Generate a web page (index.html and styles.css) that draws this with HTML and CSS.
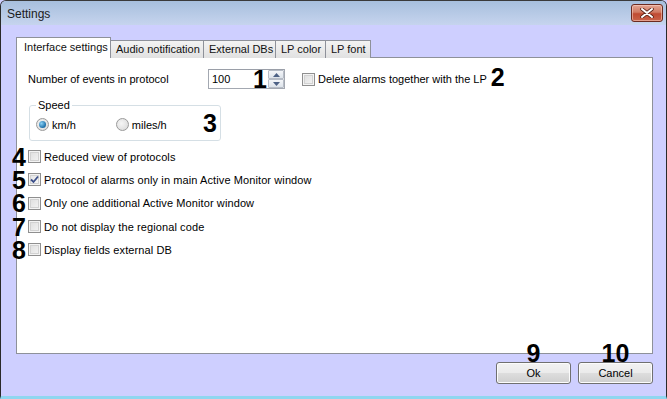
FILE: index.html
```html
<!DOCTYPE html>
<html>
<head>
<meta charset="utf-8">
<link rel="stylesheet" href="styles.css">
</head>
<body>
<div class="window">
  <div class="titlebar">
    <span class="title">Settings</span>
    <button class="close" aria-label="Close">
      <svg width="14" height="10" viewBox="0 0 14 10"><path d="M2 1 L12 9 M12 1 L2 9" stroke="#5a2418" stroke-width="3.6" stroke-linecap="round"/><path d="M2 1 L12 9 M12 1 L2 9" stroke="#fff" stroke-width="2" stroke-linecap="round"/></svg>
    </button>
  </div>
  <div class="content">
    <div class="tabs">
      <div class="tab active t1">Interface settings</div>
      <div class="tab t2">Audio notification</div>
      <div class="tab t3">External DBs</div>
      <div class="tab t4">LP color</div>
      <div class="tab t5">LP font</div>
    </div>
    <div class="panel">
      <div class="row1">
        <span class="label">Number of events in protocol</span>
        <div class="spin">
          <span class="spin-value">100</span>
          <span class="num n1">1</span>
          <span class="spin-btns">
            <span class="sb up"><svg width="7" height="4" viewBox="0 0 7 4"><path d="M0 4 L3.5 0 L7 4Z" fill="#4d6185"/></svg></span>
            <span class="sb down"><svg width="7" height="4" viewBox="0 0 7 4"><path d="M0 0 L3.5 4 L7 0Z" fill="#4d6185"/></svg></span>
          </span>
        </div>
        <label class="check chk-lp"><span class="box"></span><span class="text plain">Delete alarms together with the LP</span><span class="num-inline">2</span></label>
      </div>
      <fieldset class="speed">
        <legend>Speed</legend>
        <div class="radios">
          <label class="radio r1"><span class="dot on"></span>km/h</label>
          <label class="radio r2"><span class="dot"></span>miles/h</label>
        </div>
        <span class="num n3">3</span>
      </fieldset>
      <div class="checks">
        <label class="check row"><span class="num side">4</span><span class="box"></span><span class="text">Reduced view of protocols</span></label>
        <label class="check row"><span class="num side">5</span><span class="box checked"><svg width="9" height="9" viewBox="0 0 9 9"><path d="M1 4.5 L3.5 7 L8 1.5" fill="none" stroke="#3c4f8a" stroke-width="1.8"/></svg></span><span class="text">Protocol of alarms only in main Active Monitor window</span></label>
        <label class="check row"><span class="num side">6</span><span class="box"></span><span class="text">Only one additional Active Monitor window</span></label>
        <label class="check row"><span class="num side">7</span><span class="box"></span><span class="text">Do not display the regional code</span></label>
        <label class="check row"><span class="num side">8</span><span class="box"></span><span class="text">Display fields external DB</span></label>
      </div>
    </div>
    <div class="footer">
      <button class="btn ok"><span class="num top">9</span>Ok</button>
      <button class="btn cancel"><span class="num top">10</span>Cancel</button>
    </div>
  </div>
</div>
</body>
</html>
```
FILE: styles.css
```css
* { box-sizing: border-box; }
html, body { margin: 0; padding: 0; }
body {
  width: 667px;
  height: 399px;
  overflow: hidden;
  font-family: "Liberation Sans", Arial, sans-serif;
  font-size: 11px;
  color: #000;
  background: #cecfff;
}
.window {
  width: 667px;
  height: 399px;
  border-left: 1px solid #2a2a2a;
  border-right: 1px solid #2a2a2a;
  border-top: 1px solid #3a3a3a;
  border-bottom: 3px solid #8fd6f0;
  border-radius: 6px 6px 0 0;
  background: #cecfff;
  display: flex;
  flex-direction: column;
  overflow: hidden;
}
.titlebar {
  height: 24px;
  flex: none;
  display: flex;
  align-items: center;
  justify-content: space-between;
  padding: 0 3px 0 6px;
  background: linear-gradient(#a7bfdd, #c6d4ee);
}
.title {
  font-size: 12px;
  color: #1b1b1b;
  padding-top: 1px;
}
.close {
  width: 32px;
  height: 18px;
  border: 1px solid #6c2a20;
  border-radius: 3px;
  background: linear-gradient(#e3a492 0%, #d07a63 45%, #c04a32 55%, #c9634a 100%);
  display: flex;
  align-items: center;
  justify-content: center;
  padding: 0;
  box-shadow: inset 0 0 0 1px rgba(255,220,210,0.5);
}
.content {
  flex: 1;
  padding: 12px 13px 0 15px;
  display: flex;
  flex-direction: column;
}
.tabs {
  height: 21px;
  display: flex;
  align-items: flex-end;
  position: relative;
  z-index: 2;
  margin-bottom: -1px;
}
.tab {
  height: 18px;
  border: 1px solid #8e919a;
  border-bottom: none;
  background: linear-gradient(#f3f3f3, #e1e1e1);
  padding: 2px 0 0 6px;
  white-space: nowrap;
  margin-left: -1px;
  color: #111;
}
.tab.active {
  height: 21px;
  background: #fff;
  margin-left: 0;
  padding-top: 3px;
  position: relative;
  z-index: 3;
}
.t1 { width: 95px; padding-left: 7px; }
.t2 { width: 94px; padding-left: 5px; }
.t3 { width: 73px; padding-left: 5px; }
.t4 { width: 51px; padding-left: 5px; }
.t5 { width: 46px; padding-left: 5px; }
.panel {
  height: 297px;
  background: #fff;
  border: 1px solid #8e919a;
  position: relative;
  padding: 11px 0 0 11px;
}
.row1 {
  height: 20px;
  display: flex;
  align-items: center;
}
.label {
  width: 180px;
  flex: none;
}
.spin {
  width: 77px;
  height: 20px;
  border: 1px solid #a3a8b1;
  border-top-color: #9a9fa8;
  display: flex;
  align-items: center;
  position: relative;
  padding-left: 3px;
  flex: none;
}
.spin-value { flex: 1; }
.spin-btns {
  width: 16px;
  height: 18px;
  display: flex;
  flex-direction: column;
}
.sb {
  flex: 1;
  border: 1px solid #b6bcc6;
  background: linear-gradient(#f4f6f9, #dde3ea);
  display: flex;
  align-items: center;
  justify-content: center;
  border-radius: 1px;
}
.num {
  font-weight: bold;
  font-size: 25px;
  line-height: 18px;
  height: 18px;
  color: #000;
  font-family: "Liberation Sans", Arial, sans-serif;
}
.n1 {
  position: absolute;
  right: 17px;
  top: 0px;
}
.check {
  display: flex;
  align-items: center;
}
.chk-lp { margin-left: 17px; }
.box {
  width: 13px;
  height: 13px;
  border: 1px solid #8f8f8f;
  background: linear-gradient(135deg, #dcdcdc, #f6f6f6);
  box-shadow: inset 0 0 0 1px #f4f4f4, inset 0 0 0 2px #d2d2d2;
  flex: none;
  display: flex;
  align-items: center;
  justify-content: center;
}
.box.checked { background: linear-gradient(135deg, #e2e2e2, #fafafa); }
.text { margin-left: 3px; letter-spacing: 0.1px; }
.text.plain { letter-spacing: 0; }
.num-inline {
  font-weight: bold;
  font-size: 25px;
  line-height: 18px;
  height: 18px;
  margin-left: 4px;
  margin-top: -4px;
}
.speed {
  margin: 10px 0 0 1px;
  width: 192px;
  height: 42px;
  border: 1px solid #d5dfe5;
  border-radius: 3px;
  padding: 0 0 0 6px;
  position: relative;
}
.speed legend {
  padding: 0 2px;
  font-size: 11px;
  line-height: 12px;
}
.radios {
  display: flex;
  align-items: center;
  height: 17px;
  margin-top: 5px;
}
.radio {
  display: flex;
  align-items: center;
}
.r2 { margin-left: 40px; }
.dot {
  width: 13px;
  height: 13px;
  border-radius: 50%;
  border: 1px solid #9a9a9a;
  background: radial-gradient(circle at 40% 40%, #f6f6f6, #d6d6d6);
  margin-right: 3px;
  position: relative;
}
.dot.on::after {
  content: "";
  position: absolute;
  left: 2px;
  top: 2px;
  width: 7px;
  height: 7px;
  border-radius: 50%;
  background: radial-gradient(circle at 35% 35%, #8ad1f5, #1c6ea8 70%, #0f4f80);
}
.n3 {
  position: absolute;
  left: 173px;
  top: 3px;
}
.checks {
  display: flex;
  flex-direction: column;
  margin-top: 4px;
}
.row {
  height: 23.3px;
  position: relative;
}
.num.side {
  position: absolute;
  left: -16px;
  top: 50%;
  margin-top: -9px;
}
.footer {
  display: flex;
  justify-content: flex-end;
  gap: 7px;
  margin-top: 8px;
}
.btn {
  width: 75px;
  height: 22px;
  border: 1px solid #707070;
  border-radius: 3px;
  background: linear-gradient(#f2f2f2 0%, #ebebeb 48%, #dddddd 52%, #cfcfcf 100%);
  box-shadow: inset 0 0 0 1px #fcfcfc;
  font-family: "Liberation Sans", Arial, sans-serif;
  font-size: 11px;
  color: #000;
  padding: 0;
  position: relative;
}
.num.top {
  position: absolute;
  left: 50%;
  transform: translateX(-50%);
  bottom: 100%;
  margin-bottom: 1px;
}
```
